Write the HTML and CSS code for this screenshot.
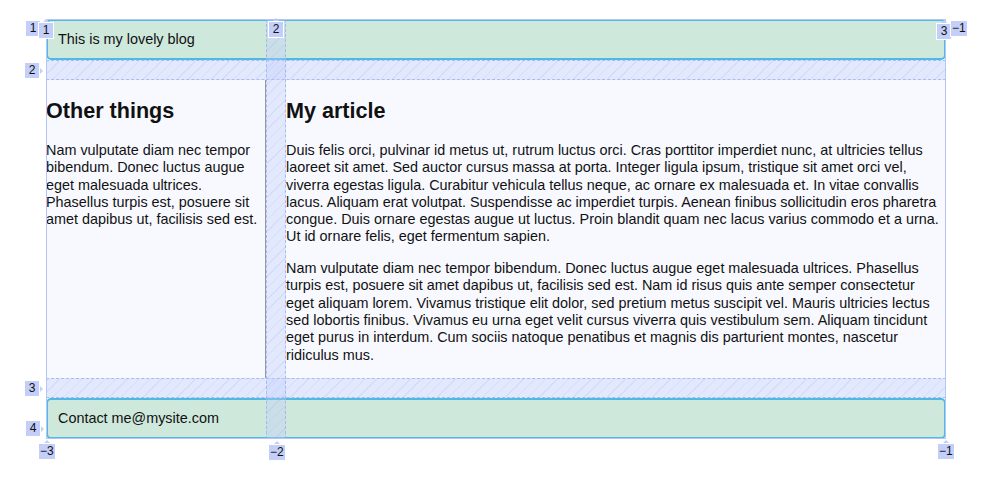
FILE: index.html
```html
<!DOCTYPE html>
<html lang="en">
<head>
<meta charset="utf-8">
<title>Grid layout</title>
<link rel="stylesheet" href="styles.css">
</head>
<body>
<div class="wrapper">
  <header class="site-header">This is my lovely blog</header>
  <article class="main">
    <h2>My article</h2>
    <p>Duis felis orci, pulvinar id metus ut, rutrum luctus orci. Cras porttitor imperdiet nunc, at ultricies tellus laoreet sit amet. Sed auctor cursus massa at porta. Integer ligula ipsum, tristique sit amet orci vel, viverra egestas ligula. Curabitur vehicula tellus neque, ac ornare ex malesuada et. In vitae convallis lacus. Aliquam erat volutpat. Suspendisse ac imperdiet turpis. Aenean finibus sollicitudin eros pharetra congue. Duis ornare egestas augue ut luctus. Proin blandit quam nec lacus varius commodo et a urna. Ut id ornare felis, eget fermentum sapien.</p>
    <p>Nam vulputate diam nec tempor bibendum. Donec luctus augue eget malesuada ultrices. Phasellus turpis est, posuere sit amet dapibus ut, facilisis sed est. Nam id risus quis ante semper consectetur eget aliquam lorem. Vivamus tristique elit dolor, sed pretium metus suscipit vel. Mauris ultricies lectus sed lobortis finibus. Vivamus eu urna eget velit cursus viverra quis vestibulum sem. Aliquam tincidunt eget purus in interdum. Cum sociis natoque penatibus et magnis dis parturient montes, nascetur ridiculus mus.</p>
  </article>
  <aside class="side">
    <h2>Other things</h2>
    <p>Nam vulputate diam nec tempor bibendum. Donec luctus augue eget malesuada ultrices. Phasellus turpis est, posuere sit amet dapibus ut, facilisis sed est.</p>
  </aside>
  <footer class="site-footer">Contact me@mysite.com</footer>

  <div class="ov-frame" aria-hidden="true">
    <span class="badge badge-row badge-r1">1</span>
    <span class="badge badge-col badge-c1">1</span>
    <span class="badge badge-col badge-c3">3</span>
    <span class="badge badge-rn1">&minus;1</span>
    <span class="badge badge-row badge-r4">4</span>
    <span class="badge badge-col badge-cn3">&minus;3</span>
    <span class="badge badge-col badge-cn1">&minus;1</span>
  </div>
  <div class="ov-gap ov-rowgap ov-rowgap-1" aria-hidden="true">
    <span class="badge badge-row badge-gap-row">2</span>
  </div>
  <div class="ov-gap ov-rowgap ov-rowgap-2" aria-hidden="true">
    <span class="badge badge-row badge-gap-row">3</span>
  </div>
  <div class="ov-gap ov-colgap" aria-hidden="true">
    <span class="badge badge-col badge-c2">2</span>
    <span class="badge badge-col badge-cn2">&minus;2</span>
  </div>
</div>
</body>
</html>
```
FILE: styles.css
```css
html, body {
  background: #ffffff;
}

body {
  margin: 0;
  padding: 19px 50px 50px 46px;
  font: 14.4px/1.2 "Liberation Sans", Arial, Helvetica, sans-serif;
  color: #111;
}

.wrapper {
  position: relative;
  width: 900px;
  display: grid;
  grid-template-columns: 1fr 3fr;
  grid-template-rows: auto auto auto;
  gap: 20px;
  background: #f8f9ff;
}

.site-header,
.site-footer {
  grid-column: 1 / 3;
  border-radius: 5px;
  padding: 10px;
  background-color: rgb(207, 232, 220);
  border: 2px solid rgb(79, 185, 227);
}

.site-header {
  grid-row: 1 / 2;
}

.site-footer {
  grid-row: 3 / 4;
}

.main {
  grid-column: 2 / 3;
  grid-row: 2 / 3;
}

.side {
  grid-column: 1 / 2;
  grid-row: 2 / 3;
  border-right: 1px solid #999;
}

h2 {
  font-size: 1.5em;
  margin: 0.83em 0;
}

p {
  margin: 1em 0;
}

/* ---------- grid inspector overlay ---------- */

.ov-frame {
  position: absolute;
  grid-row: 1 / 4;
  grid-column: 1 / 3;
  top: 0;
  left: 0;
  right: 0;
  bottom: 0;
  border: 1px solid #b4c6f8;
  pointer-events: none;
  z-index: 2;
}

.ov-gap {
  position: absolute;
  pointer-events: none;
  z-index: 1;
  background-color: rgba(190, 204, 250, 0.36);
  background-image: repeating-linear-gradient(
    -45deg,
    transparent 0 7px,
    rgba(150, 172, 242, 0.2) 7px 8px
  );
  border-color: rgba(150, 172, 242, 0.75);
  border-style: dashed;
  border-width: 0;
}

.ov-rowgap {
  grid-column: 1 / 3;
  left: 0;
  right: 0;
  top: 100%;
  height: 20px;
  box-sizing: border-box;
  border-top-width: 1px;
  border-bottom-width: 1px;
}

.ov-rowgap-1 {
  grid-row: 1 / 2;
}

.ov-rowgap-2 {
  grid-row: 2 / 3;
}

.ov-colgap {
  grid-column: 1 / 2;
  grid-row: 1 / 4;
  left: 100%;
  top: 0;
  bottom: 0;
  width: 20px;
  box-sizing: border-box;
  border-left-width: 1px;
  border-right-width: 1px;
}

.badge {
  position: absolute;
  box-sizing: border-box;
  min-width: 16px;
  height: 17px;
  padding: 0 1px;
  border: 1px solid #fff;
  background: #c3cef9;
  color: #111;
  font: 12px/15px "Liberation Sans", "DejaVu Sans", sans-serif;
  text-align: center;
  white-space: nowrap;
}

.badge-row::after {
  content: "";
  position: absolute;
  right: -4px;
  top: 50%;
  margin-top: -3px;
  border-left: 3px solid #c3cef9;
  border-top: 3px solid transparent;
  border-bottom: 3px solid transparent;
}

.badge-col::after {
  content: "";
  position: absolute;
  top: -4px;
  left: 50%;
  margin-left: -3px;
  border-bottom: 3px solid #c3cef9;
  border-left: 3px solid transparent;
  border-right: 3px solid transparent;
}

.badge-r1 { left: -22px; top: 0; }
.badge-c1 { left: -9px; top: 2px; }
.badge-c3 { left: 889px; top: 3px; }
.badge-rn1 { left: 903px; top: 0; }
.badge-r4 { left: -22px; bottom: 1px; }
.badge-cn3 { left: -9px; top: calc(100% + 5px); }
.badge-cn1 { left: 890px; top: calc(100% + 5px); }

.badge-gap-row { left: -22px; top: 1px; }
.badge-c2 { left: 1px; top: 2px; }
.badge-cn2 { left: 1px; top: calc(100% + 5px); }
```
